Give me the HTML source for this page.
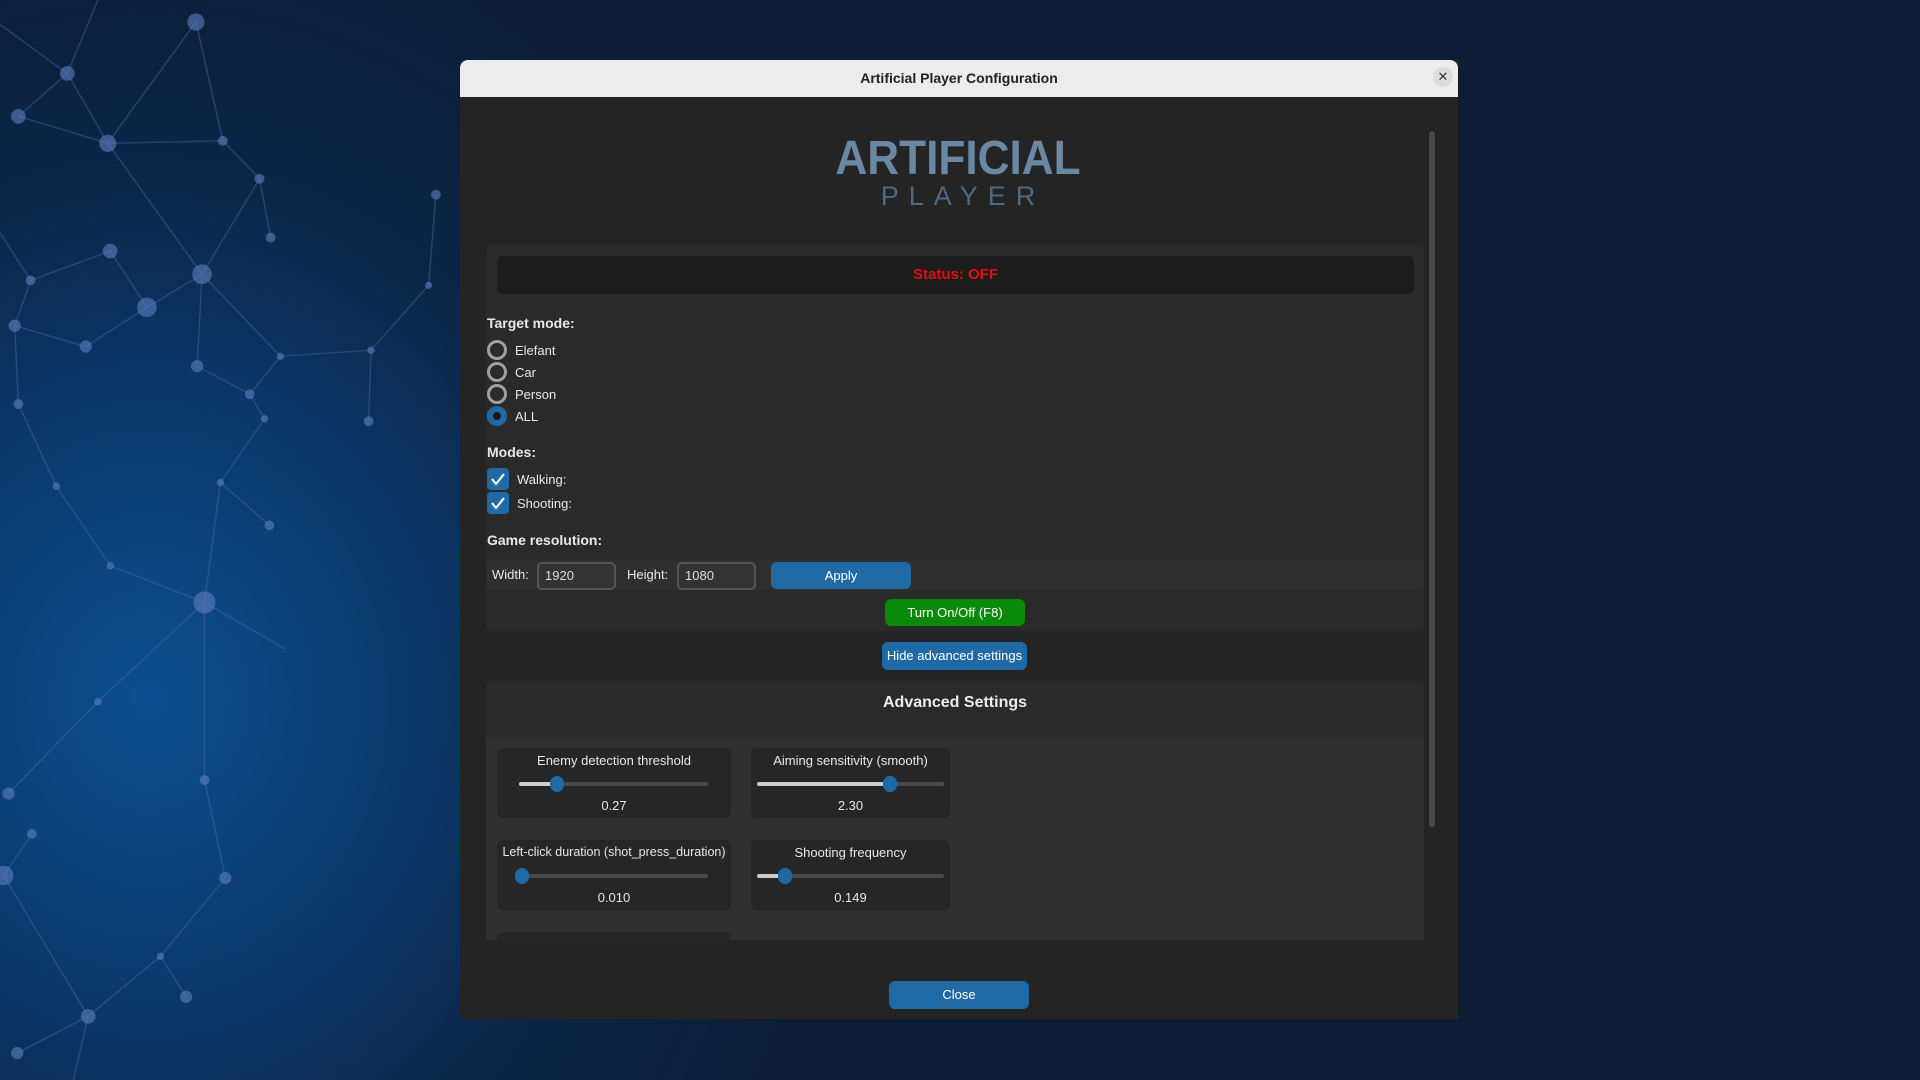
<!DOCTYPE html>
<html><head><meta charset="utf-8"><style>
*{margin:0;padding:0;box-sizing:border-box}
body{width:1920px;height:1080px;overflow:hidden;position:relative;font-family:"Liberation Sans",sans-serif;
background:radial-gradient(ellipse 700px 800px at 150px 700px,#0d4f8f 0%,#0b3a6e 35%,#0c2648 65%,#0d1d36 100%);}
.a{position:absolute}
.win{left:460px;top:60px;width:998px;height:959px;background:#242424;}
.tb{left:460px;top:60px;width:998px;height:37px;background:#ececec;border-radius:8px 8px 0 0;text-align:center;font:bold 14px "Liberation Sans",sans-serif;line-height:37px;color:#222}
.t{color:#e8e8e8;font-size:13px;white-space:nowrap}
.h{color:#e8e8e8;font-size:14px;font-weight:bold}
.radio{width:20px;height:20px;border:3px solid #a0a0a0;border-radius:50%}
.chk{width:22px;height:22px;background:#1f6aa5;border-radius:4px}
.btn{background:#1f6aa5;border-radius:6px;color:#fff;font-size:13px;text-align:center}
.card{background:#262626;border-radius:6px}
.track{height:4px;background:#4a4a4a;border-radius:2px}
.fill{height:4px;background:#ccc;border-radius:2px}
.th{width:14px;height:16px;background:#1f6aa5;border-radius:7px}
.inp{background:#333;border:2px solid #555;border-radius:5px;color:#ddd;font-size:13px;padding-left:6px;line-height:24px}
</style></head><body>
<svg class="a" style="left:0;top:0" width="1920" height="1080" viewBox="0 0 1568 882" preserveAspectRatio="none">
<g stroke="#4d6fa8" stroke-width="1.2" opacity="0.4" fill="none">
<polyline points="0,20 55,60 88,117 160,18 182,115 212,146 221,194"/>
<polyline points="15,95 55,60 80,0"/>
<polyline points="15,95 88,117 182,115"/>
<polyline points="88,117 165,224 212,146"/>
<polyline points="25,229 90,205 120,251 165,224 161,299 204,322 229,291 303,286 350,233 356,159"/>
<polyline points="12,266 70,283 120,251"/>
<polyline points="0,190 25,229 12,266 15,330"/>
<polyline points="165,224 229,291"/>
<polyline points="303,286 301,344"/>
<polyline points="204,322 216,342 180,394 167,492 233,530"/>
<polyline points="46,397 90,462 167,492 80,573 7,648"/>
<polyline points="167,492 167,637 184,717 131,781 152,814"/>
<polyline points="26,681 3,715 72,830 14,860"/>
<polyline points="131,781 72,830 60,882"/>
<polyline points="220,429 180,394"/>
<polyline points="15,330 46,397"/>
</g>
<g fill="#5f7fc0" opacity="0.6">
<circle cx="160" cy="18" r="7"/><circle cx="55" cy="60" r="6"/><circle cx="15" cy="95" r="6"/><circle cx="88" cy="117" r="7"/><circle cx="182" cy="115" r="4"/><circle cx="212" cy="146" r="4"/><circle cx="356" cy="159" r="4"/><circle cx="221" cy="194" r="4"/><circle cx="90" cy="205" r="6"/><circle cx="165" cy="224" r="8"/><circle cx="25" cy="229" r="4"/><circle cx="120" cy="251" r="8"/><circle cx="12" cy="266" r="5"/><circle cx="70" cy="283" r="5"/><circle cx="161" cy="299" r="5"/><circle cx="229" cy="291" r="3"/><circle cx="303" cy="286" r="3"/><circle cx="350" cy="233" r="3"/><circle cx="204" cy="322" r="4"/><circle cx="15" cy="330" r="4"/><circle cx="301" cy="344" r="4"/><circle cx="216" cy="342" r="3"/><circle cx="46" cy="397" r="3"/><circle cx="180" cy="394" r="3"/><circle cx="220" cy="429" r="4"/><circle cx="90" cy="462" r="3"/><circle cx="167" cy="492" r="9"/><circle cx="80" cy="573" r="3"/><circle cx="167" cy="637" r="4"/><circle cx="7" cy="648" r="5"/><circle cx="26" cy="681" r="4"/><circle cx="184" cy="717" r="5"/><circle cx="3" cy="715" r="8"/><circle cx="131" cy="781" r="3"/><circle cx="152" cy="814" r="5"/><circle cx="72" cy="830" r="6"/><circle cx="14" cy="860" r="5"/>
</g></svg>

<div class="a win"></div>
<div class="a tb">Artificial Player Configuration</div>
<div class="a" style="left:1433px;top:67px;width:20px;height:20px;border-radius:50%;background:#dcdcdc;text-align:center;font-size:13px;line-height:20px;color:#333">✕</div>

<div class="a" style="left:780px;top:134px;width:356px;text-align:center;font:bold 48px 'Liberation Sans Narrow','Liberation Sans',sans-serif;color:#6a88a4;line-height:50px;transform:scaleX(0.92)">ARTIFICIAL</div>
<div class="a" style="left:780px;top:181px;width:356px;text-align:center;font:27px 'Liberation Sans',sans-serif;color:#4e6984;letter-spacing:10px;line-height:30px;padding-left:10px">PLAYER</div>

<div class="a" style="left:1429px;top:131px;width:6px;height:696px;background:#4a4a4a;border-radius:3px"></div>

<div class="a" style="left:486px;top:245px;width:938px;height:386px;background:#2a2a2a;border-radius:6px"></div>
<div class="a" style="left:497px;top:256px;width:917px;height:38px;background:#1c1c1c;border-radius:6px;text-align:center;line-height:38px;color:#e01010;font-weight:bold;font-size:15px">Status: OFF</div>

<div class="a h" style="left:487px;top:315px">Target mode:</div>
<div class="a radio" style="left:487px;top:340px"></div><div class="a t" style="left:515px;top:343px">Elefant</div>
<div class="a radio" style="left:487px;top:362px"></div><div class="a t" style="left:515px;top:365px">Car</div>
<div class="a radio" style="left:487px;top:384px"></div><div class="a t" style="left:515px;top:387px">Person</div>
<div class="a radio" style="left:487px;top:406px;border:6px solid #1f6aa5;background:#1a1a1a"></div><div class="a t" style="left:515px;top:409px">ALL</div>

<div class="a h" style="left:487px;top:444px">Modes:</div>
<div class="a chk" style="left:487px;top:468px"><svg width="22" height="22"><path d="M5 11 L9 16 L17 6" stroke="#fff" stroke-width="2" fill="none"/></svg></div><div class="a t" style="left:517px;top:472px">Walking:</div>
<div class="a chk" style="left:487px;top:492px"><svg width="22" height="22"><path d="M5 11 L9 16 L17 6" stroke="#fff" stroke-width="2" fill="none"/></svg></div><div class="a t" style="left:517px;top:496px">Shooting:</div>

<div class="a h" style="left:487px;top:532px">Game resolution:</div>
<div class="a" style="left:487px;top:560px;width:937px;height:30px;background:#2f2f2f;border-radius:4px"></div>
<div class="a t" style="left:492px;top:567px">Width:</div>
<div class="a inp" style="left:537px;top:562px;width:79px;height:28px">1920</div>
<div class="a t" style="left:627px;top:567px">Height:</div>
<div class="a inp" style="left:677px;top:562px;width:79px;height:28px">1080</div>
<div class="a btn" style="left:771px;top:562px;width:140px;height:27px;line-height:27px">Apply</div>
<div class="a btn" style="left:885px;top:599px;width:140px;height:27px;line-height:27px;background:#0a8a0a">Turn On/Off (F8)</div>
<div class="a btn" style="left:882px;top:642px;width:145px;height:28px;line-height:28px">Hide advanced settings</div>

<div class="a" style="left:486px;top:681px;width:938px;height:259px;background:#2a2a2a;border-radius:6px 6px 0 0"></div>
<div class="a" style="left:486px;top:737px;width:938px;height:203px;background:#303030"></div>
<div class="a" style="left:486px;top:694px;width:938px;text-align:center;color:#eee;font-size:16px;font-weight:bold">Advanced Settings</div>

<div class="a card" style="left:497px;top:748px;width:234px;height:70px"></div>
<div class="a t" style="left:497px;top:753px;width:234px;text-align:center">Enemy detection threshold</div>
<div class="a track" style="left:519px;top:782px;width:189px"></div><div class="a fill" style="left:519px;top:782px;width:38px"></div><div class="a th" style="left:550px;top:776px"></div>
<div class="a t" style="left:497px;top:798px;width:234px;text-align:center">0.27</div>

<div class="a card" style="left:751px;top:748px;width:199px;height:70px"></div>
<div class="a t" style="left:751px;top:753px;width:199px;text-align:center">Aiming sensitivity (smooth)</div>
<div class="a track" style="left:757px;top:782px;width:187px"></div><div class="a fill" style="left:757px;top:782px;width:133px"></div><div class="a th" style="left:883px;top:776px"></div>
<div class="a t" style="left:751px;top:798px;width:199px;text-align:center">2.30</div>

<div class="a card" style="left:497px;top:840px;width:234px;height:71px"></div>
<div class="a t" style="left:494px;top:845px;width:240px;text-align:center;font-size:12.5px">Left-click duration (shot_press_duration)</div>
<div class="a track" style="left:519px;top:874px;width:189px"></div><div class="a th" style="left:515px;top:868px"></div>
<div class="a t" style="left:497px;top:890px;width:234px;text-align:center">0.010</div>

<div class="a card" style="left:751px;top:840px;width:199px;height:71px"></div>
<div class="a t" style="left:751px;top:845px;width:199px;text-align:center">Shooting frequency</div>
<div class="a track" style="left:757px;top:874px;width:187px"></div><div class="a fill" style="left:757px;top:874px;width:28px"></div><div class="a th" style="left:778px;top:868px"></div>
<div class="a t" style="left:751px;top:890px;width:199px;text-align:center">0.149</div>

<div class="a card" style="left:497px;top:932px;width:234px;height:8px;border-radius:6px 6px 0 0"></div>

<div class="a btn" style="left:889px;top:981px;width:140px;height:28px;line-height:28px">Close</div>
</body></html>
